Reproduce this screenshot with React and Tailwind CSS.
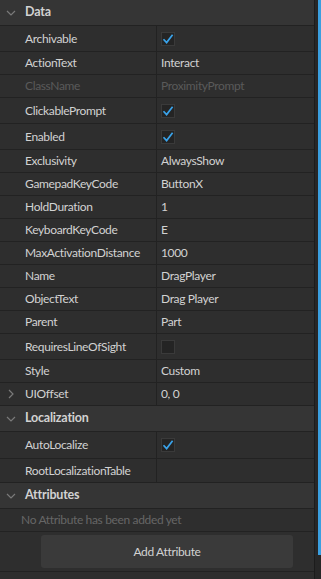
import React from "react";

const Chevron = ({ dir = "down" }) => (
  <svg width="10" height="10" viewBox="0 0 10 10" className="shrink-0">
    {dir === "down" ? (
      <path d="M1 3 L5 7 L9 3" fill="none" stroke="#7a7a7a" strokeWidth="1.2" />
    ) : (
      <path d="M3 1 L7 5 L3 9" fill="none" stroke="#7a7a7a" strokeWidth="1.2" />
    )}
  </svg>
);

const Check = ({ checked }) => (
  <div className="w-[14px] h-[14px] bg-[#242424] border border-[#3a3a3a] flex items-center justify-center">
    {checked && (
      <svg width="12" height="12" viewBox="0 0 12 12">
        <path d="M1.5 6.2 L4.6 9.6 L10.6 1.8" fill="none" stroke="#3aa3ea" strokeWidth="1.7" />
      </svg>
    )}
  </div>
);

const txt = "text-[12px] tracking-[-0.35px]";

const Header = ({ title }) => (
  <div className="h-[26px] shrink-0 flex items-center bg-[#353535] border-b border-[#222222]">
    <div className="w-[25px] pl-[6px] flex items-center">
      <Chevron />
    </div>
    <span className="text-[12.5px] tracking-[-0.2px] font-bold text-[#d2d2d2]">{title}</span>
  </div>
);

const Row = ({ name, value, check, checked, disabled, expand, h = "h-[23px]" }) => (
  <div className={"shrink-0 flex border-b border-[#222222] " + h}>
    <div className="w-[157px] shrink-0 flex items-center border-r border-[#222222]">
      <div className="w-[25px] pl-[6px] flex items-center">
        {expand && <Chevron dir="right" />}
      </div>
      <span className={txt + " " + (disabled ? "text-[#5a5a5a]" : "text-[#d2d2d2]")}>
        {name}
      </span>
    </div>
    <div className="flex-1 flex items-center pl-[4px]">
      {check ? (
        <Check checked={checked} />
      ) : (
        <span className={txt + " " + (disabled ? "text-[#5a5a5a]" : "text-[#d2d2d2]")}>
          {value}
        </span>
      )}
    </div>
  </div>
);

export default function App() {
  return (
    <div
      className="w-[321px] h-[579px] bg-[#2e2e2e] flex overflow-hidden"
      style={{ fontFamily: "Lato, 'Noto Sans', sans-serif" }}
    >
      <div className="w-[314px] shrink-0 flex flex-col">
        <Header title="Data" />
        <Row name="Archivable" check checked h="h-[26px]" />
        <Row name="ActionText" value="Interact" />
        <Row name="ClassName" value="ProximityPrompt" disabled />
        <Row name="ClickablePrompt" check checked h="h-[26px]" />
        <Row name="Enabled" check checked h="h-[26px]" />
        <Row name="Exclusivity" value="AlwaysShow" />
        <Row name="GamepadKeyCode" value="ButtonX" />
        <Row name="HoldDuration" value="1" />
        <Row name="KeyboardKeyCode" value="E" />
        <Row name="MaxActivationDistance" value="1000" />
        <Row name="Name" value="DragPlayer" />
        <Row name="ObjectText" value="Drag Player" />
        <Row name="Parent" value="Part" />
        <Row name="RequiresLineOfSight" check checked={false} h="h-[26px]" />
        <Row name="Style" value="Custom" />
        <Row name="UIOffset" value="0, 0" expand />
        <Header title="Localization" />
        <Row name="AutoLocalize" check checked h="h-[27px]" />
        <Row name="RootLocalizationTable" value="" h="h-[24px]" />
        <Header title="Attributes" />
        <div className="h-[23px] shrink-0 flex items-center pl-[21px] border-b border-[#222222]">
          <span className={txt + " text-[#666666]"}>No Attribute has been added yet</span>
        </div>
        <div className="h-[40px] shrink-0 flex items-center pl-[41px] pr-[20px] border-b border-[#222222]">
          <div className="w-[252px] h-[33px] rounded-[3px] bg-[#3a3a3a] flex items-center justify-center">
            <span className={txt + " text-[#d2d2d2]"}>Add Attribute</span>
          </div>
        </div>
      </div>
      <div className="w-[7px] shrink-0 border-l border-[#1c1c1c] bg-[#272727] flex justify-end">
        <div className="w-[3px] h-[555px] bg-[#3a9fe0]" />
      </div>
    </div>
  );
}
